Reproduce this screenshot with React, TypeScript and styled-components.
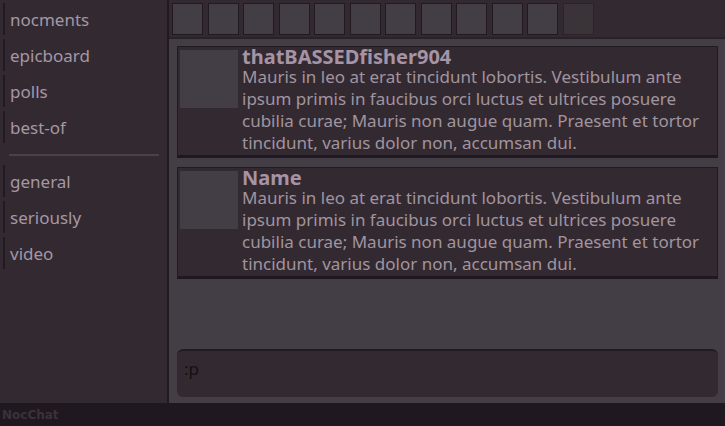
import React from "react";
import styled, { createGlobalStyle } from "styled-components";

const Global = createGlobalStyle`
  html, body { margin: 0; padding: 0; height: 100%; }
  body { font-family: "Noto Sans", "DejaVu Sans", sans-serif; background: #201820; overflow: hidden; }
  #root { height: 100%; }
`;

const Page = styled.div`
  display: grid;
  grid-template-rows: 1fr 23px;
  height: 426px;
  width: 725px;
`;

const Body = styled.div`
  display: grid;
  grid-template-columns: 169px 1fr;
  min-height: 0;
`;

const Sidebar = styled.nav`
  background: #332a31;
  border-right: 2px solid #221a21;
  padding-top: 3px;
  display: flex;
  flex-direction: column;
`;

const NavItem = styled.div`
  height: 32px;
  margin: 0 0 4px 3px;
  border-left: 2px solid #221a21;
  padding-left: 5px;
  display: flex;
  align-items: center;
  font-size: 17px;
  color: #a597a5;
`;

const Divider = styled.hr`
  border: none;
  height: 2px;
  background: #4a4248;
  margin: 7px 8px 9px 9px;
`;

const Main = styled.main`
  background: #433e45;
  display: flex;
  flex-direction: column;
  min-height: 0;
`;

const Toolbar = styled.div`
  height: 39px;
  background: #332a31;
  border-bottom: 2px solid #2a2229;
  display: flex;
  align-items: flex-start;
  gap: 4.5px;
  padding: 3px 0 0 3px;
  box-sizing: border-box;
`;

const ToolButton = styled.div<{ $dim?: boolean }>`
  width: 31px;
  height: 32px;
  box-sizing: border-box;
  background: ${(p) => (p.$dim ? "#3a3439" : "#433e45")};
  border: 1px solid ${(p) => (p.$dim ? "#2b2329" : "#221a21")};
`;

const Feed = styled.div`
  flex: 1;
  padding: 7px 7px 0 8px;
  display: flex;
  flex-direction: column;
  gap: 9px;
  min-height: 0;
`;

const Card = styled.div`
  display: flex;
  gap: 4px;
  background: #332a31;
  border: 1px solid #221a21;
  border-bottom: 3px solid #201820;
  padding: 3px 2px 1px 2px;
`;

const Avatar = styled.div`
  width: 58px;
  height: 58px;
  flex: none;
  background: #433e45;
`;

const Content = styled.div`
  display: flex;
  flex-direction: column;
  margin-top: -3px;
`;

const Name = styled.div`
  font-size: 20px;
  font-weight: bold;
  line-height: 19px;
  color: #a593a6;
`;

const Text = styled.div`
  font-size: 17px;
  line-height: 22px;
  color: #a1949f;
`;

const Composer = styled.div`
  margin: 0 7px 6px 8px;
  height: 48px;
  box-sizing: border-box;
  background: #332a31;
  border-top: 2px solid #221a21;
  border-radius: 6px;
  padding: 6px 7px;
  font-size: 17px;
  color: #111;
`;

const Footer = styled.footer`
  background: #201820;
  color: #3b3239;
  font-family: "DejaVu Sans", sans-serif;
  font-size: 12px;
  font-weight: bold;
  padding-left: 2px;
  display: flex;
  align-items: center;
`;

const lorem =
  "Mauris in leo at erat tincidunt lobortis. Vestibulum ante ipsum primis in faucibus orci luctus et ultrices posuere cubilia curae; Mauris non augue quam. Praesent et tortor tincidunt, varius dolor non, accumsan dui.";

const top = ["nocments", "epicboard", "polls", "best-of"];
const bottom = ["general", "seriously", "video"];
const messages = [
  { name: "thatBASSEDfisher904", text: lorem },
  { name: "Name", text: lorem },
];

export default function App() {
  return (
    <Page>
      <Global />
      <Body>
        <Sidebar>
          {top.map((t) => (
            <NavItem key={t}>{t}</NavItem>
          ))}
          <Divider />
          {bottom.map((t) => (
            <NavItem key={t}>{t}</NavItem>
          ))}
        </Sidebar>
        <Main>
          <Toolbar>
            {Array.from({ length: 12 }).map((_, i) => (
              <ToolButton key={i} $dim={i === 11} />
            ))}
          </Toolbar>
          <Feed>
            {messages.map((m, i) => (
              <Card key={i}>
                <Avatar />
                <Content>
                  <Name>{m.name}</Name>
                  <Text>{m.text}</Text>
                </Content>
              </Card>
            ))}
          </Feed>
          <Composer>:p</Composer>
        </Main>
      </Body>
      <Footer>NocChat</Footer>
    </Page>
  );
}
